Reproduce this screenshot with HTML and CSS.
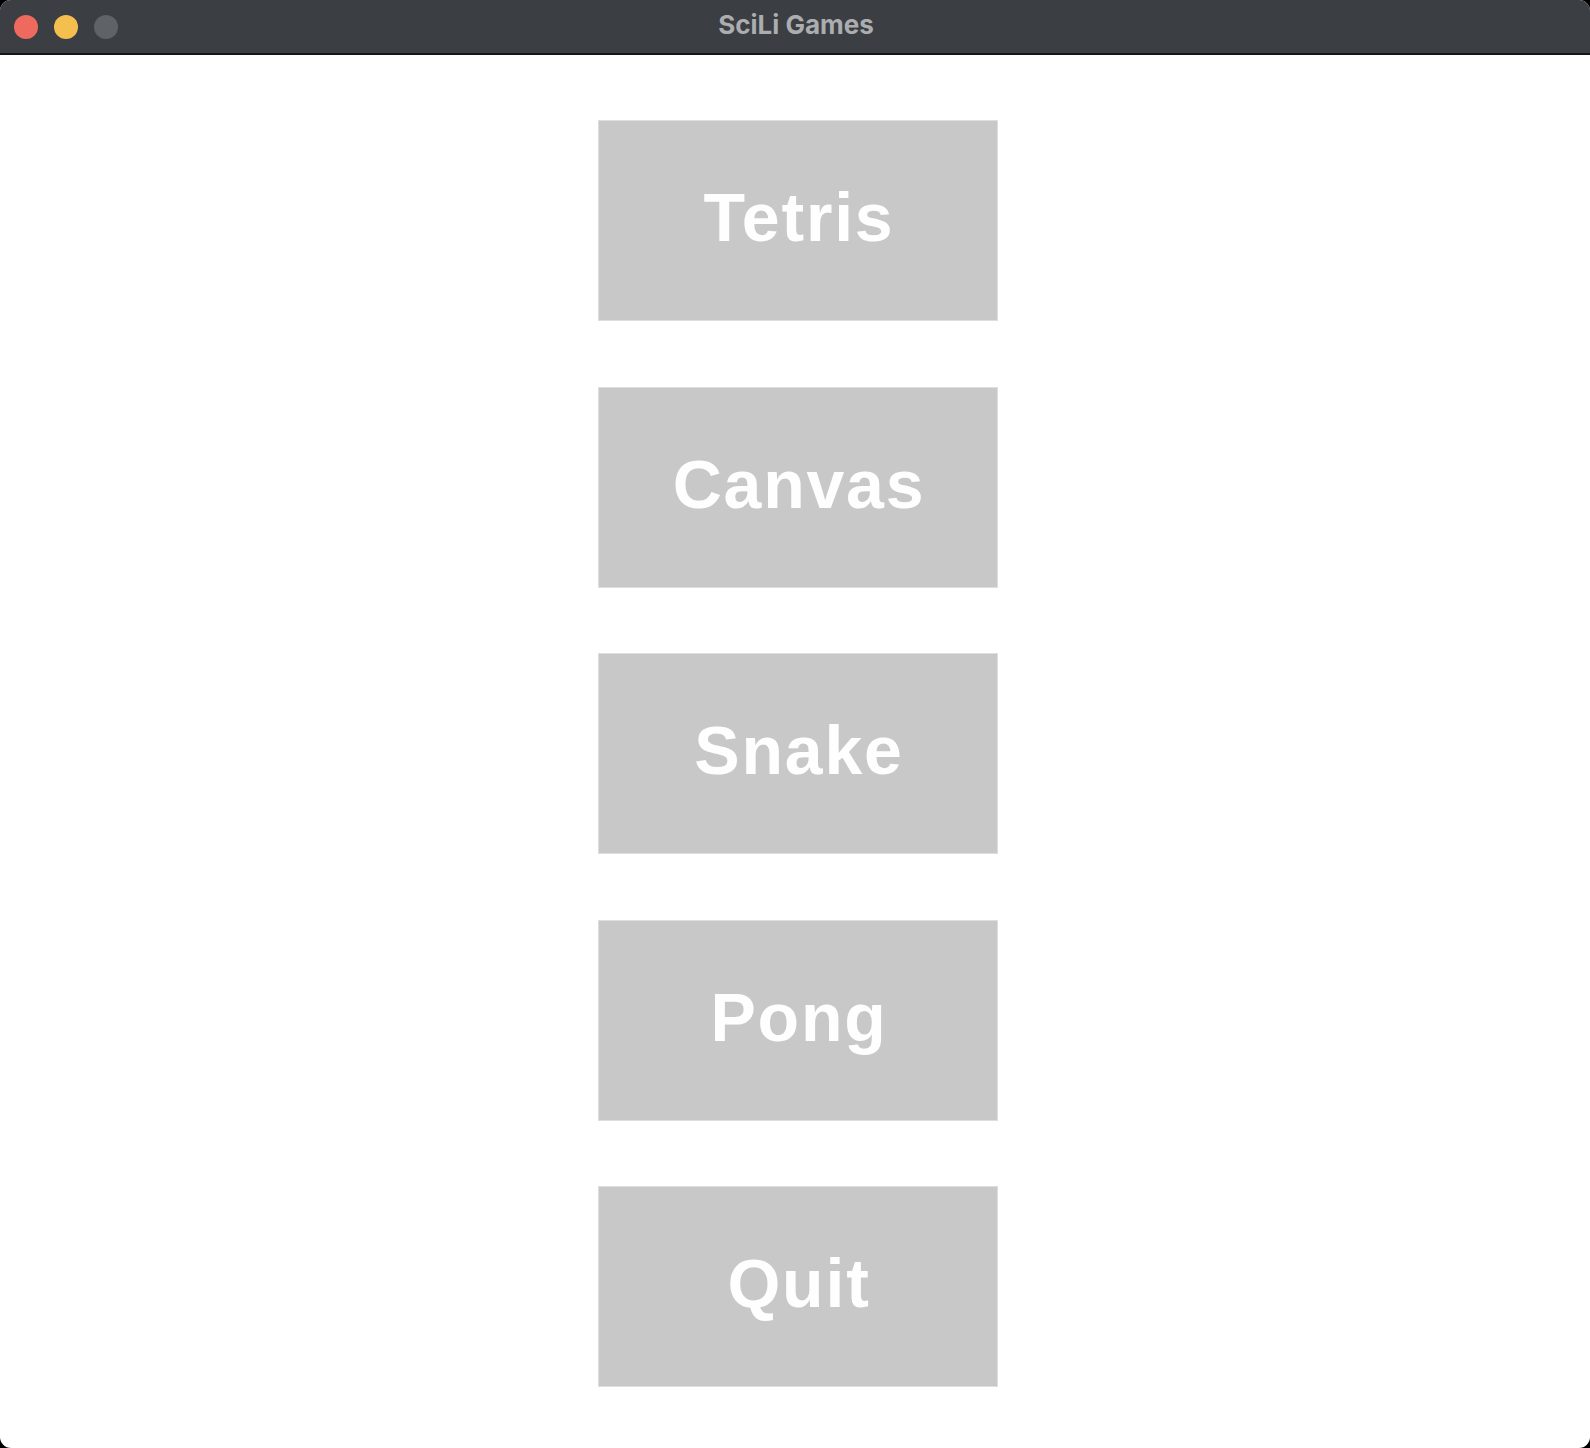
FILE: index.html
```html
<!DOCTYPE html>
<html lang="en">
<head>
<meta charset="utf-8">
<title>SciLi Games</title>
<link rel="stylesheet" href="styles.css">
</head>
<body>
<div class="window">
  <header class="titlebar">
    <div class="lights">
      <span class="light red"></span>
      <span class="light yellow"></span>
      <span class="light gray"></span>
    </div>
    <div class="title">SciLi Games</div>
  </header>
  <main class="menu">
    <button class="game-btn">Tetris</button>
    <button class="game-btn">Canvas</button>
    <button class="game-btn">Snake</button>
    <button class="game-btn">Pong</button>
    <button class="game-btn">Quit</button>
  </main>
</div>
</body>
</html>
```

FILE: styles.css
```css
html, body {
  margin: 0;
  padding: 0;
  background: #000;
}
.window {
  width: 1590px;
  height: 1448px;
  background: #fff;
  border-radius: 11px;
  overflow: hidden;
  display: flex;
  flex-direction: column;
}
.titlebar {
  height: 53px;
  flex: none;
  background: #3b3e42;
  border-bottom: 2px solid #141516;
  display: flex;
  align-items: center;
  position: relative;
}
.lights {
  display: flex;
  gap: 16px;
  padding-left: 14px;
  padding-top: 1px;
}
.light {
  width: 24px;
  height: 24px;
  border-radius: 50%;
  display: block;
}
.red { background: #ee6a5f; }
.yellow { background: #f5bf4f; }
.gray { background: #5f6266; }
.title {
  position: absolute;
  left: 0;
  right: 0;
  top: 0;
  height: 53px;
  line-height: 50px;
  text-align: center;
  padding-left: 2px;
  font-family: Inter, "Liberation Sans", sans-serif;
  font-weight: 700;
  font-size: 26px;
  color: #abadaf;
}
.menu {
  display: flex;
  flex-direction: column;
  align-items: center;
  padding-top: 65px;
  padding-left: 6px;
  gap: 65.5px;
}
.game-btn {
  width: 400px;
  height: 201px;
  margin: 0;
  padding: 0 0 7px 2px;
  background: #c8c8c8;
  border: 1px solid #dedede;
  color: #fefefe;
  font-family: "Liberation Sans", Arial, sans-serif;
  font-weight: 700;
  font-size: 68px;
  letter-spacing: 1.8px;
  line-height: 1;
  text-align: center;
  cursor: pointer;
}
```
